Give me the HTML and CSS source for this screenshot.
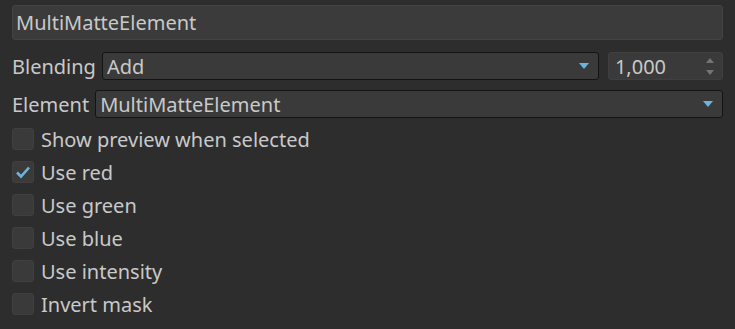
FILE: index.html
```html
<!DOCTYPE html>
<html lang="en">
<head>
    <meta charset="UTF-8">
    <title>MultiMatteElement</title>
    <link rel="stylesheet" href="styles.css">
</head>
<body>
    <div class="panel">
        <div class="name-field">MultiMatteElement</div>

        <div class="row">
            <span class="label">Blending</span>
            <div class="combo combo-blend">
                <span class="combo-text">Add</span>
                <span class="arrow"></span>
            </div>
            <div class="spin">
                <span class="spin-text">1,000</span>
                <span class="spin-arrows">
                    <span class="up"></span>
                    <span class="down"></span>
                </span>
            </div>
        </div>

        <div class="row row-element">
            <span class="label">Element</span>
            <div class="combo combo-element">
                <span class="combo-text">MultiMatteElement</span>
                <span class="arrow"></span>
            </div>
        </div>

        <div class="checks">
            <div class="check"><span class="box"></span>Show preview when selected</div>
            <div class="check"><span class="box checked">
                <svg width="16" height="14" viewBox="0 0 16 14"><path d="M2 7.5 L6 11.5 L14 2.5" fill="none" stroke="#6cb4e0" stroke-width="2.6"/></svg>
            </span>Use red</div>
            <div class="check"><span class="box"></span>Use green</div>
            <div class="check"><span class="box"></span>Use blue</div>
            <div class="check"><span class="box"></span>Use intensity</div>
            <div class="check"><span class="box"></span>Invert mask</div>
        </div>
    </div>
</body>
</html>
```

FILE: styles.css
```css
body {
    margin: 0;
    background-color: #2d2d2d;
    font-family: "Noto Sans", "Open Sans", sans-serif;
    font-size: 20px;
    color: #c9c9c9;
}

.panel {
    padding: 5px 12px 0 12px;
    display: flex;
    flex-direction: column;
}

.name-field {
    height: 35px;
    box-sizing: border-box;
    background-color: #3b3b3b;
    border: 1px solid #434343;
    border-radius: 3px;
    padding-left: 3px;
    display: flex;
    align-items: center;
}

.row {
    margin-top: 12px;
    height: 28px;
    display: flex;
    align-items: center;
}

.row-element {
    margin-top: 10px;
}

.label {
    margin-right: 6px;
}

.combo {
    height: 28px;
    box-sizing: border-box;
    background-color: #3a3a3a;
    border: 1px solid #141414;
    border-radius: 3px;
    display: flex;
    align-items: center;
    padding-left: 4px;
    padding-right: 9px;
}

.combo-blend {
    width: 497px;
}

.combo-element {
    flex: 1;
}

.combo-text {
    flex: 1;
}

.arrow {
    width: 0;
    height: 0;
    border-left: 5px solid transparent;
    border-right: 5px solid transparent;
    border-top: 6px solid #6cb4e0;
}

.spin {
    margin-left: 9px;
    flex: 1;
    height: 28px;
    box-sizing: border-box;
    background-color: #3a3a3a;
    border: 1px solid #404040;
    border-radius: 3px;
    display: flex;
    align-items: center;
    padding-left: 6px;
    padding-right: 8px;
}

.spin-text {
    flex: 1;
}

.spin-arrows {
    display: flex;
    flex-direction: column;
    gap: 7px;
}

.spin-arrows .up {
    border-left: 4px solid transparent;
    border-right: 4px solid transparent;
    border-bottom: 5px solid #747474;
}

.spin-arrows .down {
    border-left: 4px solid transparent;
    border-right: 4px solid transparent;
    border-top: 5px solid #747474;
}

.checks {
    margin-top: 10px;
    display: flex;
    flex-direction: column;
    gap: 11px;
}

.check {
    height: 22px;
    display: flex;
    align-items: center;
}

.box {
    width: 22px;
    height: 22px;
    box-sizing: border-box;
    background-color: #3a3a3a;
    border: 1px solid #404040;
    border-radius: 3px;
    margin-right: 7px;
    display: flex;
    align-items: center;
    justify-content: center;
}
```
